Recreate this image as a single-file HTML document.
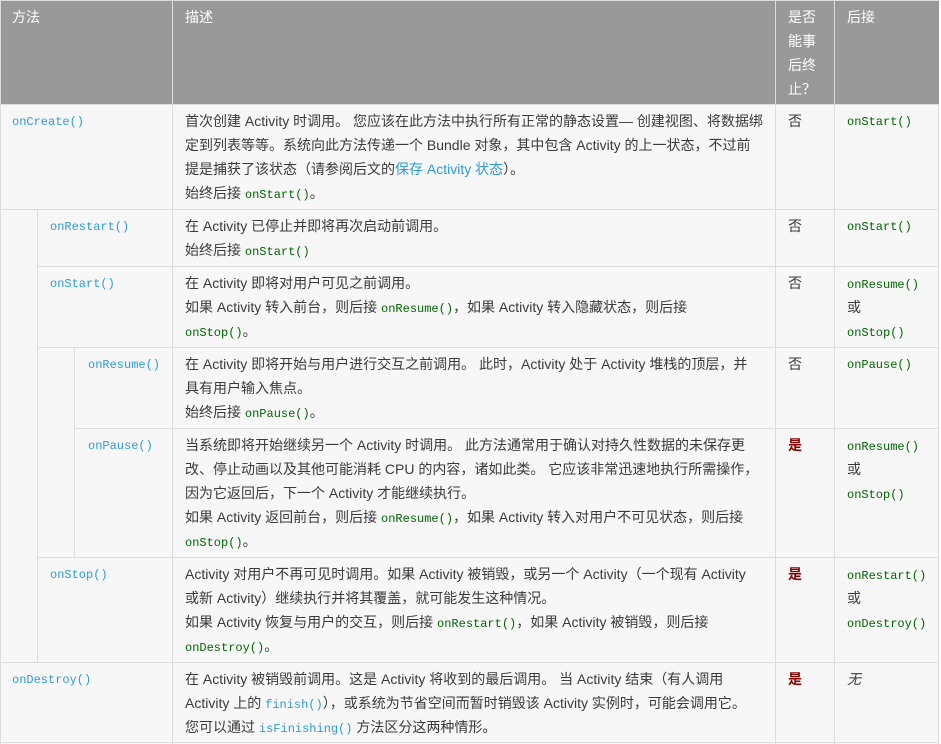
<!DOCTYPE html>
<html><head><meta charset="utf-8"><style>
body{margin:0;width:941px;height:744px;background:#fff;font-family:"Liberation Sans","Noto Sans CJK SC",sans-serif;font-size:14px;color:#3a3a3a;overflow:hidden;position:relative}
.c{position:absolute;box-sizing:border-box;background:#f7f7f7;border-left:1px solid #ddd;border-top:1px solid #ddd;line-height:24px;white-space:nowrap}
.h{background:#999;color:#fff;border-color:#ddd;font-size:14px}
.m{font-family:"Liberation Mono",monospace;font-size:12px;color:#2f9ad8}
code{font-family:"Liberation Mono",monospace;font-size:12px;color:#060;line-height:1;vertical-align:baseline}
.g{font-family:"Liberation Mono",monospace;font-size:12px;color:#060;line-height:1}
.y{color:#800;font-weight:bold}
a{color:#2f9ad8;text-decoration:none}
a.m{line-height:1}
</style></head><body>
<div class="c h" style="left:0;top:0;width:173px;height:105px;padding:4px 11px">方法</div>
<div class="c h" style="left:172px;top:0;width:604px;height:105px;padding:4px 12px">描述</div>
<div class="c h" style="left:775px;top:0;width:60px;height:105px;padding:4px 12px;white-space:normal;line-height:24px">是否<br>能事<br>后终<br>止？</div>
<div class="c h" style="left:834px;top:0;width:105px;height:105px;padding:4px 12px">后接</div>

<div class="c m" style="left:0;top:104px;width:173px;height:106px;padding:5px 11px">onCreate()</div>
<div class="c" style="left:172px;top:104px;width:604px;height:106px;padding:4px 12px">首次创建 Activity 时调用。 您应该在此方法中执行所有正常的静态设置— 创建视图、将数据绑<br>定到列表等等。系统向此方法传递一个 Bundle 对象，其中包含 Activity 的上一状态，不过前<br>提是捕获了该状态（请参阅后文的<a>保存 Activity 状态</a>）。<br>始终后接 <code>onStart()</code>。</div>
<div class="c" style="left:775px;top:104px;width:60px;height:106px;padding:4px 12px">否</div>
<div class="c g" style="left:834px;top:104px;width:105px;height:106px;padding:5px 12px;line-height:24px">onStart()</div>

<div class="c" style="left:0;top:209px;width:38px;height:454px"></div>

<div class="c m" style="left:37px;top:209px;width:136px;height:58px;padding:5px 12px">onRestart()</div>
<div class="c" style="left:172px;top:209px;width:604px;height:58px;padding:4px 12px">在 Activity 已停止并即将再次启动前调用。<br>始终后接 <code>onStart()</code></div>
<div class="c" style="left:775px;top:209px;width:60px;height:58px;padding:4px 12px">否</div>
<div class="c g" style="left:834px;top:209px;width:105px;height:58px;padding:5px 12px;line-height:24px">onStart()</div>

<div class="c m" style="left:37px;top:266px;width:136px;height:82px;padding:5px 12px">onStart()</div>
<div class="c" style="left:172px;top:266px;width:604px;height:82px;padding:4px 12px">在 Activity 即将对用户可见之前调用。<br>如果 Activity 转入前台，则后接 <code>onResume()</code>，如果 Activity 转入隐藏状态，则后接<br><code>onStop()</code>。</div>
<div class="c" style="left:775px;top:266px;width:60px;height:82px;padding:4px 12px">否</div>
<div class="c" style="left:834px;top:266px;width:105px;height:82px;padding:4px 12px"><span class="g">onResume()</span><br>或<br><span class="g">onStop()</span></div>

<div class="c" style="left:37px;top:347px;width:38px;height:211px"></div>

<div class="c m" style="left:74px;top:347px;width:99px;height:82px;padding:5px 13px">onResume()</div>
<div class="c" style="left:172px;top:347px;width:604px;height:82px;padding:4px 12px">在 Activity 即将开始与用户进行交互之前调用。 此时，Activity 处于 Activity 堆栈的顶层，并<br>具有用户输入焦点。<br>始终后接 <code>onPause()</code>。</div>
<div class="c" style="left:775px;top:347px;width:60px;height:82px;padding:4px 12px">否</div>
<div class="c g" style="left:834px;top:347px;width:105px;height:82px;padding:5px 12px;line-height:24px">onPause()</div>

<div class="c m" style="left:74px;top:428px;width:99px;height:130px;padding:5px 13px">onPause()</div>
<div class="c" style="left:172px;top:428px;width:604px;height:130px;padding:4px 12px">当系统即将开始继续另一个 Activity 时调用。 此方法通常用于确认对持久性数据的未保存更<br>改、停止动画以及其他可能消耗 CPU 的内容，诸如此类。 它应该非常迅速地执行所需操作，<br>因为它返回后，下一个 Activity 才能继续执行。<br>如果 Activity 返回前台，则后接 <code>onResume()</code>，如果 Activity 转入对用户不可见状态，则后接<br><code>onStop()</code>。</div>
<div class="c y" style="left:775px;top:428px;width:60px;height:130px;padding:4px 12px">是</div>
<div class="c" style="left:834px;top:428px;width:105px;height:130px;padding:4px 12px"><span class="g">onResume()</span><br>或<br><span class="g">onStop()</span></div>

<div class="c m" style="left:37px;top:557px;width:136px;height:106px;padding:5px 12px">onStop()</div>
<div class="c" style="left:172px;top:557px;width:604px;height:106px;padding:4px 12px">Activity 对用户不再可见时调用。如果 Activity 被销毁，或另一个 Activity（一个现有 Activity<br>或新 Activity）继续执行并将其覆盖，就可能发生这种情况。<br>如果 Activity 恢复与用户的交互，则后接 <code>onRestart()</code>，如果 Activity 被销毁，则后接<br><code>onDestroy()</code>。</div>
<div class="c y" style="left:775px;top:557px;width:60px;height:106px;padding:4px 12px">是</div>
<div class="c" style="left:834px;top:557px;width:105px;height:106px;padding:4px 12px"><span class="g">onRestart()</span><br>或<br><span class="g">onDestroy()</span></div>

<div class="c m" style="left:0;top:662px;width:173px;height:82px;padding:5px 11px">onDestroy()</div>
<div class="c" style="left:172px;top:662px;width:604px;height:82px;padding:4px 12px">在 Activity 被销毁前调用。这是 Activity 将收到的最后调用。 当 Activity 结束（有人调用<br>Activity 上的 <a class="m">finish()</a>），或系统为节省空间而暂时销毁该 Activity 实例时，可能会调用它。<br>您可以通过 <a class="m">isFinishing()</a> 方法区分这两种情形。</div>
<div class="c y" style="left:775px;top:662px;width:60px;height:82px;padding:4px 12px">是</div>
<div class="c" style="left:834px;top:662px;width:105px;height:82px;padding:4px 12px;font-style:italic">无</div>
<div style="position:absolute;left:938px;top:104px;width:1px;height:640px;background:#ddd"></div>
<div style="position:absolute;left:0;top:742px;width:939px;height:1px;background:#ddd"></div>
</body></html>
